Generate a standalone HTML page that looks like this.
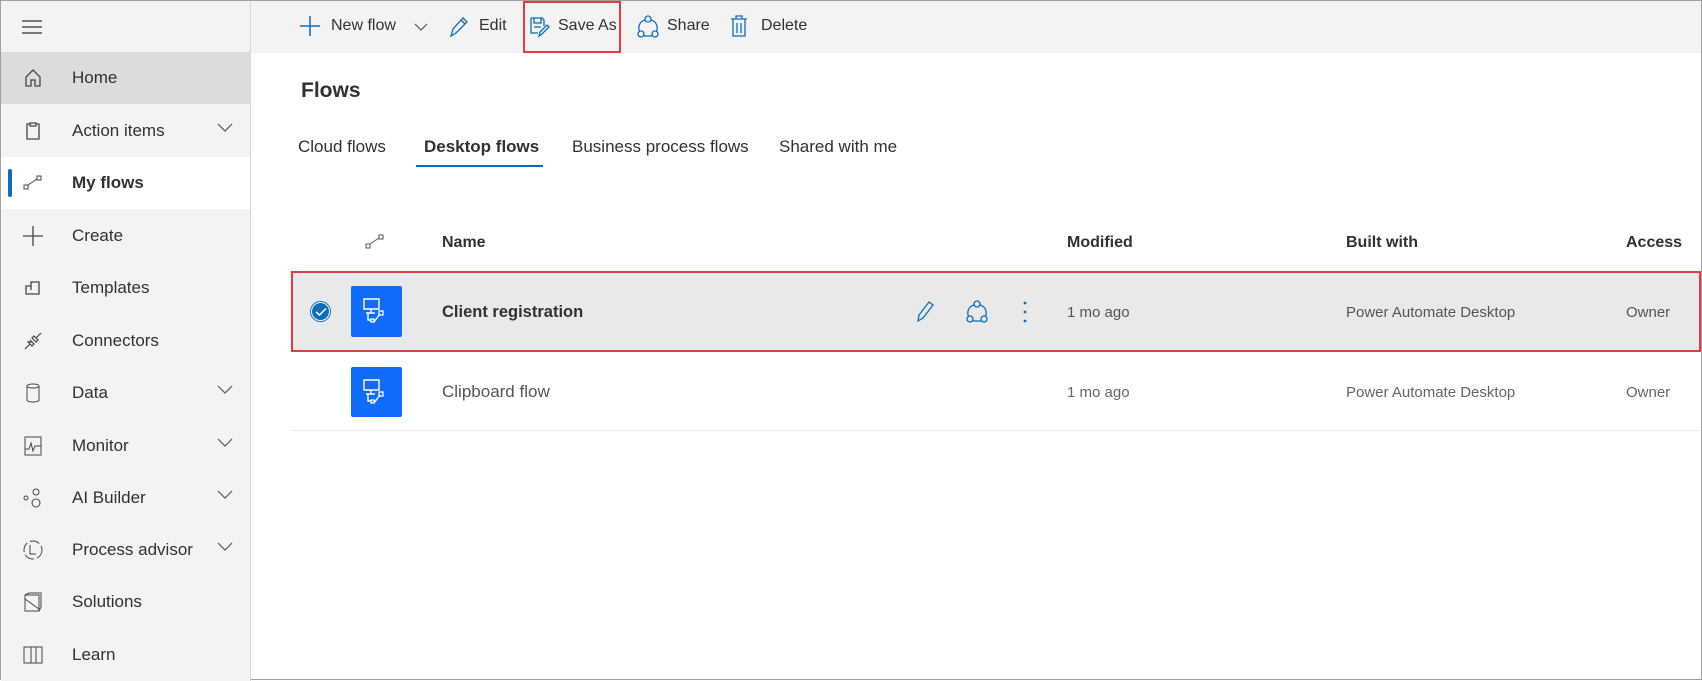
<!DOCTYPE html>
<html><head><style>
*{box-sizing:border-box;margin:0;padding:0}
body{width:1702px;height:680px;overflow:hidden;font-family:"Liberation Sans",sans-serif;color:#323130;background:#fff;position:relative;border:1px solid #a0a0a0}
.side{position:absolute;left:0;top:0;width:250px;height:680px;background:#f3f3f3;border-right:1px solid #d8d8d8}
.top{position:absolute;left:250px;top:0;right:0;height:52px;background:#f3f3f3}
.row{position:absolute;left:0;width:249px;height:52px;display:flex;align-items:center;font-size:17px}
.row .ic{position:absolute;left:21px;top:15px;width:22px;height:22px}
.row span{position:absolute;left:71px}
.row .chev{position:absolute;left:216px;top:18px}
.t{position:absolute;white-space:nowrap}
.tb{position:absolute;top:16px;font-size:16px;white-space:nowrap}
svg{overflow:visible}
</style></head><body>
<div class="side">
<svg style="position:absolute;left:21px;top:19px" width="20" height="14"><path d="M0 1H20M0 7H20M0 13H20" stroke="#333" stroke-width="1.3"/></svg>
<div class="row" style="top:51px;background:#dcdcdc"><svg class="ic" viewBox="0 0 22 22"><path d="M4 10L11 3L18 10V19H13V13H9V19H4Z" fill="none" stroke="#444" stroke-width="1.3"/></svg><span>Home</span></div>
<div class="row" style="top:104px"><svg class="ic" viewBox="0 0 22 22"><path d="M5 4H8V3H14V4H17V19H5Z M8 4V6H14V4" fill="none" stroke="#444" stroke-width="1.3"/></svg><span>Action items</span><svg class="chev" width="16" height="10"><path d="M1 1L8 8L15 1" fill="none" stroke="#555" stroke-width="1.2"/></svg></div>
<div class="row" style="top:156px;background:#fff;font-weight:bold"><div style="position:absolute;left:7px;top:12px;width:4px;height:28px;background:#0f6cbd;border-radius:2px"></div><svg class="ic" viewBox="0 0 22 22"><rect x="2" y="13" width="4" height="4" fill="none" stroke="#444"/><rect x="15" y="4" width="4" height="4" fill="none" stroke="#444"/><path d="M6 13L15 7" stroke="#444"/></svg><span>My flows</span></div>
<div class="row" style="top:209px"><svg class="ic" viewBox="0 0 22 22"><path d="M11 1V21M1 11H21" stroke="#444" stroke-width="1.3"/></svg><span>Create</span></div>
<div class="row" style="top:261px"><svg class="ic" viewBox="0 0 22 22"><path d="M4 9H9V5H17V17H4Z M9 9V13" fill="none" stroke="#444" stroke-width="1.3"/></svg><span>Templates</span></div>
<div class="row" style="top:314px"><svg class="ic" viewBox="0 0 22 22"><path d="M3 19L8 14M14 8L19 3M8 10L12 14M6 12L10 16 12 14 10 12ZM10 8L14 12 16 10 12 6Z" fill="none" stroke="#444" stroke-width="1.2"/></svg><span>Connectors</span></div>
<div class="row" style="top:366px"><svg class="ic" viewBox="0 0 22 22"><ellipse cx="11" cy="4" rx="6" ry="2" fill="none" stroke="#444"/><path d="M5 4V18A6 2 0 0 0 17 18V4" fill="none" stroke="#444"/></svg><span>Data</span><svg class="chev" width="16" height="10"><path d="M1 1L8 8L15 1" fill="none" stroke="#555" stroke-width="1.2"/></svg></div>
<div class="row" style="top:419px"><svg class="ic" viewBox="0 0 22 22"><rect x="3" y="2" width="16" height="18" fill="none" stroke="#444"/><path d="M3 14H7L9 8 11 16 13 11H19" fill="none" stroke="#444"/></svg><span>Monitor</span><svg class="chev" width="16" height="10"><path d="M1 1L8 8L15 1" fill="none" stroke="#555" stroke-width="1.2"/></svg></div>
<div class="row" style="top:471px"><svg class="ic" viewBox="0 0 22 22"><circle cx="4" cy="11" r="2" fill="none" stroke="#444"/><circle cx="14" cy="5" r="3" fill="none" stroke="#444"/><circle cx="14" cy="16" r="4" fill="none" stroke="#444"/></svg><span>AI Builder</span><svg class="chev" width="16" height="10"><path d="M1 1L8 8L15 1" fill="none" stroke="#555" stroke-width="1.2"/></svg></div>
<div class="row" style="top:523px"><svg class="ic" viewBox="0 0 22 22"><circle cx="11" cy="11" r="9" fill="none" stroke="#444" stroke-dasharray="10 3"/><path d="M8 6V15H14" fill="none" stroke="#444"/></svg><span>Process advisor</span><svg class="chev" width="16" height="10"><path d="M1 1L8 8L15 1" fill="none" stroke="#555" stroke-width="1.2"/></svg></div>
<div class="row" style="top:575px"><svg class="ic" viewBox="0 0 22 22"><path d="M3 4H17V20H3Z M3 4L7 2H19V16L17 20 M3 8L17 18" fill="none" stroke="#444"/></svg><span>Solutions</span></div>
<div class="row" style="top:628px"><svg class="ic" viewBox="0 0 22 22"><path d="M2 3H9V19H2ZM9 3H14V19H9ZM14 3H20V19H14Z" fill="none" stroke="#444"/></svg><span>Learn</span></div>
</div>
<div class="top">
<svg style="position:absolute;left:49px;top:15px" width="20" height="20"><path d="M10 0V20M0 10H20" stroke="#0f6cbd" stroke-width="1.5"/></svg>
<div class="tb" style="left:80px">New flow</div>
<svg style="position:absolute;left:163px;top:22px" width="14" height="9"><path d="M1 1L7 7L13 1" fill="none" stroke="#555" stroke-width="1.2"/></svg>
<svg style="position:absolute;left:197px;top:15px" width="20" height="22"><path d="M3 20L5 13L15 2L19 6L8 17Z M13 4L17 8" fill="none" stroke="#0f6cbd" stroke-width="1.3"/></svg>
<div class="tb" style="left:228px">Edit</div>
<svg style="position:absolute;left:278px;top:15px" width="22" height="22"><path d="M2 2H13L15 4V10M2 2V17H9 M5 2V7H12V2 M5 11H12" fill="none" stroke="#0f6cbd" stroke-width="1.3"/><path d="M10 20L11 16L18 9L20 11L13 18Z" fill="none" stroke="#0f6cbd" stroke-width="1.3"/></svg>
<div class="tb" style="left:307px">Save As</div>
<div style="position:absolute;left:272px;top:0;width:98px;height:52px;border:2px solid #e83a3f"></div>
<svg style="position:absolute;left:386px;top:14px" width="22" height="24"><path d="M8 5A8 8 0 0 0 3 17M14 5A8 8 0 0 1 19 17M7 21H15" fill="none" stroke="#0f6cbd" stroke-width="1.3"/><circle cx="11" cy="4" r="3" fill="#fff" stroke="#0f6cbd" stroke-width="1.3"/><circle cx="4" cy="19" r="3" fill="#fff" stroke="#0f6cbd" stroke-width="1.3"/><circle cx="18" cy="19" r="3" fill="#fff" stroke="#0f6cbd" stroke-width="1.3"/></svg>
<div class="tb" style="left:416px">Share</div>
<svg style="position:absolute;left:479px;top:14px" width="18" height="22"><path d="M1 4H17M6 4V1H12V4M3 4V21H15V4M7 8V18M11 8V18" fill="none" stroke="#0f6cbd" stroke-width="1.3"/></svg>
<div class="tb" style="left:510px">Delete</div>
</div>
<div class="t" style="left:300px;top:78px;font-size:21px;font-weight:bold">Flows</div>
<div class="t" style="left:297px;top:136px;font-size:17px">Cloud flows</div>
<div class="t" style="left:423px;top:136px;font-size:17px;font-weight:bold">Desktop flows</div>
<div class="t" style="left:571px;top:136px;font-size:17px">Business process flows</div>
<div class="t" style="left:778px;top:136px;font-size:17px">Shared with me</div>
<div style="position:absolute;left:415px;top:164px;width:127px;height:2px;background:#0f6cbd"></div>
<svg style="position:absolute;left:364px;top:233px" width="20" height="16"><rect x="1" y="10" width="4" height="4" fill="none" stroke="#555"/><rect x="14" y="1" width="4" height="4" fill="none" stroke="#555"/><path d="M5 10L14 4" stroke="#555"/></svg>
<div class="t" style="left:441px;top:233px;font-size:16px;font-weight:bold">Name</div>
<div class="t" style="left:1066px;top:233px;font-size:16px;font-weight:bold">Modified</div>
<div class="t" style="left:1345px;top:233px;font-size:16px;font-weight:bold">Built with</div>
<div class="t" style="left:1625px;top:233px;font-size:16px;font-weight:bold">Access</div>
<div style="position:absolute;left:290px;top:270px;width:1410px;height:81px;background:#e9e9e9;border:2px solid #e83a3f"></div>
<div style="position:absolute;left:310px;top:301px;width:19px;height:19px;border-radius:50%;background:#0f6cbd;border:1.5px solid #fff;box-shadow:0 0 0 1px #0f6cbd"></div>
<svg style="position:absolute;left:314px;top:306px" width="12" height="10"><path d="M1 5L4.5 8L11 1.5" fill="none" stroke="#fff" stroke-width="1.5"/></svg>
<div style="position:absolute;left:350px;top:285px;width:51px;height:51px;background:#0f6cfd;border-radius:2px"></div>
<div style="position:absolute;left:350px;top:366px;width:51px;height:50px;background:#0f6cfd;border-radius:2px"></div>
<svg style="position:absolute;left:362px;top:297px" width="26" height="28"><path d="M1 1H16V11H1Z M8 11V15M3 15H12M5 15V22H8 M11 24L17 16" fill="none" stroke="#fff" stroke-width="1.4"/><rect x="16" y="13" width="4" height="4" fill="none" stroke="#fff" stroke-width="1.3"/><rect x="8" y="21" width="3" height="3" fill="none" stroke="#fff" stroke-width="1.3"/></svg>
<svg style="position:absolute;left:362px;top:378px" width="26" height="28"><path d="M1 1H16V11H1Z M8 11V15M3 15H12M5 15V22H8 M11 24L17 16" fill="none" stroke="#fff" stroke-width="1.4"/><rect x="16" y="13" width="4" height="4" fill="none" stroke="#fff" stroke-width="1.3"/><rect x="8" y="21" width="3" height="3" fill="none" stroke="#fff" stroke-width="1.3"/></svg>
<div class="t" style="left:441px;top:302px;font-size:16.5px;font-weight:bold">Client registration</div>
<svg style="position:absolute;left:915px;top:299px" width="20" height="22"><path d="M2 21L3 15L13 2L17 5L7 18Z" fill="none" stroke="#0f6cbd" stroke-width="1.3"/></svg>
<svg style="position:absolute;left:965px;top:299px" width="22" height="24"><path d="M8 5A8 8 0 0 0 3 17M14 5A8 8 0 0 1 19 17M7 21H15" fill="none" stroke="#0f6cbd" stroke-width="1.3"/><circle cx="11" cy="4" r="3" fill="#e9e9e9" stroke="#0f6cbd" stroke-width="1.3"/><circle cx="4" cy="19" r="3" fill="#e9e9e9" stroke="#0f6cbd" stroke-width="1.3"/><circle cx="18" cy="19" r="3" fill="#e9e9e9" stroke="#0f6cbd" stroke-width="1.3"/></svg>
<svg style="position:absolute;left:1022px;top:300px" width="4" height="22"><circle cx="2" cy="2" r="1.4" fill="#0f6cbd"/><circle cx="2" cy="11" r="1.4" fill="#0f6cbd"/><circle cx="2" cy="20" r="1.4" fill="#0f6cbd"/></svg>
<div class="t" style="left:1066px;top:303px;font-size:15px;color:#555">1 mo ago</div>
<div class="t" style="left:1345px;top:303px;font-size:15px;color:#555">Power Automate Desktop</div>
<div class="t" style="left:1625px;top:303px;font-size:15px;color:#555">Owner</div>
<div class="t" style="left:441px;top:381px;font-size:17px;color:#555">Clipboard flow</div>
<div class="t" style="left:1066px;top:383px;font-size:15px;color:#666">1 mo ago</div>
<div class="t" style="left:1345px;top:383px;font-size:15px;color:#666">Power Automate Desktop</div>
<div class="t" style="left:1625px;top:383px;font-size:15px;color:#666">Owner</div>
<div style="position:absolute;left:290px;top:429px;width:1410px;height:1px;background:#ececec"></div>
</body></html>
